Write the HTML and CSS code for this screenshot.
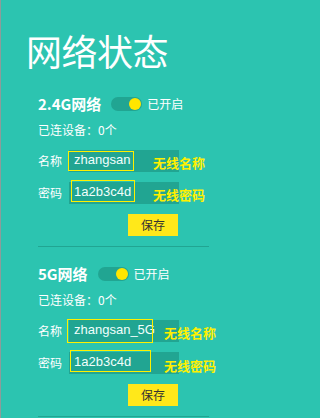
FILE: index.html
```html
<!DOCTYPE html>
<html lang="zh">
<head>
<meta charset="utf-8">
<title>网络状态</title>
<link rel="stylesheet" href="styles.css">
</head>
<body>
<div class="page">
  <h1 class="title">网络状态</h1>

  <section class="net">
    <div class="net-head">
      <span class="net-name">2.4G网络</span>
      <span class="toggle"><span class="knob"></span></span>
      <span class="net-state">已开启</span>
    </div>
    <div class="count">已连设备：0个</div>
    <div class="field first">
      <span class="label">名称</span>
      <div class="input"><span class="value">zhangsan</span>
        <span class="mark m1"></span><span class="note n1">无线名称</span></div>
    </div>
    <div class="field">
      <span class="label">密码</span>
      <div class="input"><span class="value">1a2b3c4d</span>
        <span class="mark m2"></span><span class="note n1">无线密码</span></div>
    </div>
    <button class="save">保存</button>
    <div class="divider"></div>
  </section>

  <section class="net">
    <div class="net-head">
      <span class="net-name">5G网络</span>
      <span class="toggle"><span class="knob"></span></span>
      <span class="net-state">已开启</span>
    </div>
    <div class="count">已连设备：0个</div>
    <div class="field first">
      <span class="label">名称</span>
      <div class="input"><span class="value">zhangsan_5G</span>
        <span class="mark m3"></span><span class="note n3">无线名称</span></div>
    </div>
    <div class="field">
      <span class="label">密码</span>
      <div class="input"><span class="value">1a2b3c4d</span>
        <span class="mark m4"></span><span class="note n4">无线密码</span></div>
    </div>
    <button class="save">保存</button>
    <div class="divider"></div>
  </section>
</div>
</body>
</html>
```

FILE: styles.css
```css
html, body {
  margin: 0;
  padding: 0;
}
body {
  width: 233px;
  height: 418px;
  overflow: hidden;
  background: #2cc4b0;
  font-family: "Noto Sans CJK SC", "Liberation Sans", sans-serif;
  color: #ffffff;
}
.page {
  box-sizing: border-box;
  height: 418px;
  border-left: 1px solid #8c9c9a;
  padding-left: 37px;
}
.title {
  margin: 0 0 0 -12px;
  padding-top: 31px;
  font-size: 36px;
  line-height: 38px;
  font-weight: 400;
  letter-spacing: -0.5px;
}
.net {
  margin-top: 28px;
}
.net + .net {
  margin-top: 20px;
}
.net-head {
  display: flex;
  align-items: center;
  height: 14px;
}
.net-name {
  font-size: 15px;
  font-weight: 700;
  line-height: 14px;
}
.toggle {
  position: relative;
  width: 31px;
  height: 14px;
  border-radius: 7px;
  background: #21a592;
  margin-left: 10px;
}
.knob {
  position: absolute;
  right: 1px;
  top: 1px;
  width: 12px;
  height: 12px;
  border-radius: 50%;
  background: #ffe600;
}
.net-state {
  margin-left: 5px;
  font-size: 12px;
  line-height: 14px;
}
.count {
  margin-top: 11px;
  font-size: 12px;
  line-height: 16px;
}
.field {
  display: flex;
  align-items: center;
  margin-top: 10px;
}
.field.first {
  margin-top: 12px;
}
.label {
  width: 31px;
  font-size: 12px;
  line-height: 16px;
}
.input {
  position: relative;
  box-sizing: border-box;
  width: 110px;
  height: 22px;
  background: #21a592;
  padding-left: 5px;
  display: flex;
  align-items: center;
}
.value {
  font-family: "Liberation Sans", sans-serif;
  font-size: 13px;
  line-height: 16px;
  margin-top: -2px;
  color: #f2fffc;
}
.mark {
  position: absolute;
  box-sizing: border-box;
  border: 1px solid #fff000;
}
.m1 { left: -1px; top: 1px; width: 66px; height: 20px; }
.m2 { left: 2px; top: -2px; width: 64px; height: 22px; }
.m3 { left: -2px; top: -1px; width: 86px; height: 24px; }
.m4 { left: 1px; top: -2px; width: 81px; height: 22px; }
.note {
  position: absolute;
  top: 6px;
  font-size: 13px;
  font-weight: 700;
  line-height: 14px;
  color: #fff000;
  white-space: nowrap;
}
.n1 { left: 84px; }
.n3 { left: 95px; }
.n4 { left: 95px; top: 7px; }
.save {
  display: block;
  margin: 10px 0 0 90px;
  width: 50px;
  height: 22px;
  padding: 0;
  border: none;
  background: #ffe81a;
  color: #333333;
  font-family: "Noto Sans CJK SC", sans-serif;
  font-size: 12px;
  line-height: 22px;
}
.divider {
  margin-top: 10px;
  width: 171px;
  height: 1px;
  background: #21a592;
}
```
